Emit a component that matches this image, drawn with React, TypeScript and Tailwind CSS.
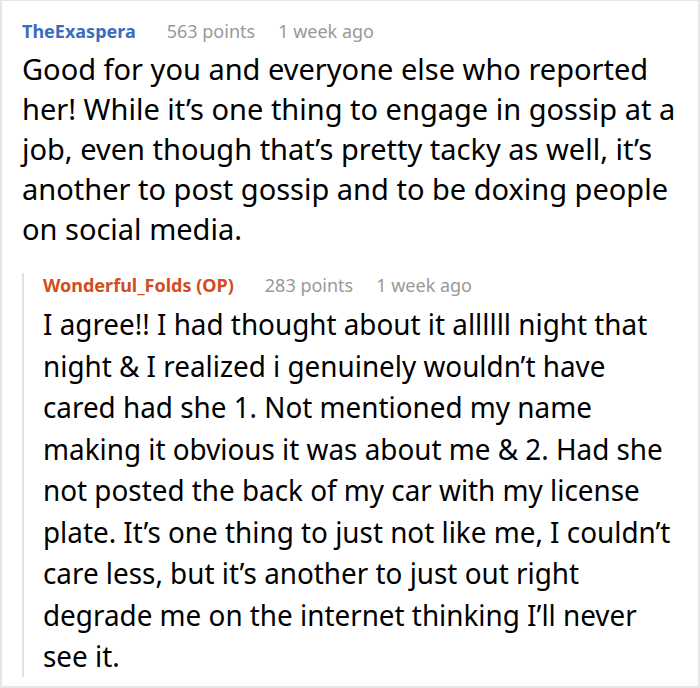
import React from 'react';

interface CommentProps {
  author: string;
  authorClass: string;
  points: number;
  time: string;
}

const CommentHeader: React.FC<CommentProps> = ({ author, authorClass, points, time }) => (
  <div className="flex items-center text-[18px] leading-[24px]">
    <span className={`font-bold ${authorClass}`}>{author}</span>
    <span className="ml-[31px] text-[#999999]">{points} points</span>
    <span className="ml-[23px] text-[#999999]">{time}</span>
  </div>
);

const replyLines = [
  'I agree!! I had thought about it allllll night that',
  'night & I realized i genuinely wouldn’t have',
  'cared had she 1. Not mentioned my name',
  'making it obvious it was about me & 2. Had she',
  'not posted the back of my car with my license',
  'plate. It’s one thing to just not like me, I couldn’t',
  'care less, but it’s another to just out right',
  'degrade me on the internet thinking I’ll never',
  'see it.',
];

const App: React.FC = () => {
  return (
    <div
      className="w-[700px] h-[688px] bg-white border-l-2 border-t border-r-2 border-b-2 border-[#e6e6e6] overflow-hidden text-black"
      style={{ fontFamily: '"Noto Sans", "Open Sans", sans-serif' }}
    >
      <div className="pl-[20px] pr-4 pt-[18px]">
        <CommentHeader author="TheExaspera" authorClass="text-[#3b6cba]" points={563} time="1 week ago" />
        <p className="mt-[6px] text-[29px] leading-[40px]">
          Good for you and everyone else who reported her! While it’s one thing to engage in gossip at a job, even though that’s pretty tacky as well, it’s another to post gossip and to be doxing people on social media.
        </p>
        <div className="mt-[24px] border-l-2 border-[#e3e3e3] pl-[19px]">
          <CommentHeader author="Wonderful_Folds (OP)" authorClass="text-[#d24d1c]" points={283} time="1 week ago" />
          <p className="mt-[6px] -mb-[8px] text-[29px] leading-[41.5px] whitespace-nowrap origin-left scale-x-[0.96]">
            {replyLines.map((line, i) => (
              <span key={i} className="block">{line}</span>
            ))}
          </p>
        </div>
      </div>
    </div>
  );
};

export default App;
